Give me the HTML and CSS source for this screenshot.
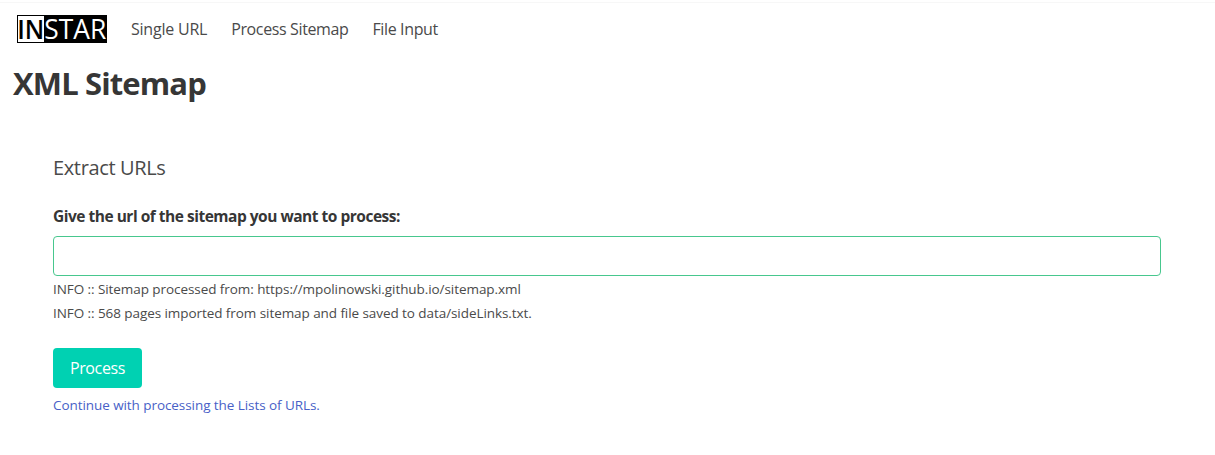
FILE: index.html
```html
<!DOCTYPE html>
<html lang="en">
<head>
<meta charset="utf-8">
<title>XML Sitemap</title>
<link rel="stylesheet" href="styles.css">
</head>
<body>
<nav class="navbar">
  <a class="brand" href="#" aria-label="INSTAR">
    <svg class="logo" width="90" height="28" viewBox="0 0 90 28">
      <rect width="90" height="28" fill="#000"/>
      <rect x="1" y="1" width="26" height="26" fill="#fff"/>
      <text class="logo-text logo-dark" x="0.2" y="24" textLength="27" lengthAdjust="spacingAndGlyphs">IN</text>
      <text class="logo-text" x="27.2" y="24" textLength="62" lengthAdjust="spacingAndGlyphs">STAR</text>
    </svg>
  </a>
  <a class="nav-item nav-first" href="#">Single URL</a>
  <a class="nav-item" href="#">Process Sitemap</a>
  <a class="nav-item" href="#">File Input</a>
</nav>
<h1 class="title">XML Sitemap</h1>
<main class="section">
  <h2 class="subtitle">Extract URLs</h2>
  <form class="form">
    <label class="label" for="url">Give the url of the sitemap you want to process:</label>
    <input class="input" id="url" type="text">
    <p class="help">INFO :: Sitemap processed from: https://mpolinowski.github.io/sitemap.xml</p>
    <p class="help">INFO :: 568 pages imported from sitemap and file saved to data/sideLinks.txt.</p>
    <button class="button" type="button">Process</button>
    <a class="link" href="#">Continue with processing the Lists of URLs.</a>
  </form>
</main>
</body>
</html>
```
FILE: styles.css
```css
* { box-sizing: border-box; }
body { margin: 0; padding-top: 2px; background: #fff; color: #4a4a4a; font: 16px/24px "Open Sans", "Noto Sans", sans-serif; }
a { text-decoration: none; }
.navbar { display: flex; align-items: center; height: 53px; padding-left: 5px; border-top: 1px solid #f7f7f7; }
.brand { display: flex; padding: 0 12px; }
.logo { display: block; overflow: visible; }
.logo-text { fill: #fff; font: 500 27px/1 "Open Sans", sans-serif; }
.logo-dark { fill: #000; font-weight: 600; }
.nav-item { padding: 8px 12px; color: #4a4a4a; letter-spacing: -0.37px; }
.nav-first { letter-spacing: -0.22px; }
.title { margin: 10px 0 0 13px; font-size: 31px; line-height: 36px; font-weight: 700; color: #363636; letter-spacing: -0.88px; }
.section { padding: 54px 54px 0 53px; }
.subtitle { margin: 0; font-size: 20px; line-height: 25px; font-weight: 400; letter-spacing: -0.36px; }
.form { display: flex; flex-direction: column; align-items: flex-start; padding-top: 24px; }
.label { font-size: 15.5px; font-weight: 700; color: #363636; margin-bottom: 8px; letter-spacing: -0.49px; }
.input { width: 100%; height: 40px; border: 1px solid #48c78e; border-radius: 4px; font: inherit; padding: 0 11px; outline: 0; margin-bottom: 1px; }
.help { margin: 0; font-size: 13.5px; letter-spacing: -0.07px; }
.button { margin: 23px 0 5px; width: 89px; height: 40px; border: 0; border-radius: 4px; background: #00d1b2; color: #fff; font: inherit; padding: 0; letter-spacing: -0.35px; }
.link { font-size: 13.5px; color: #485fc7; letter-spacing: -0.07px; }
```
